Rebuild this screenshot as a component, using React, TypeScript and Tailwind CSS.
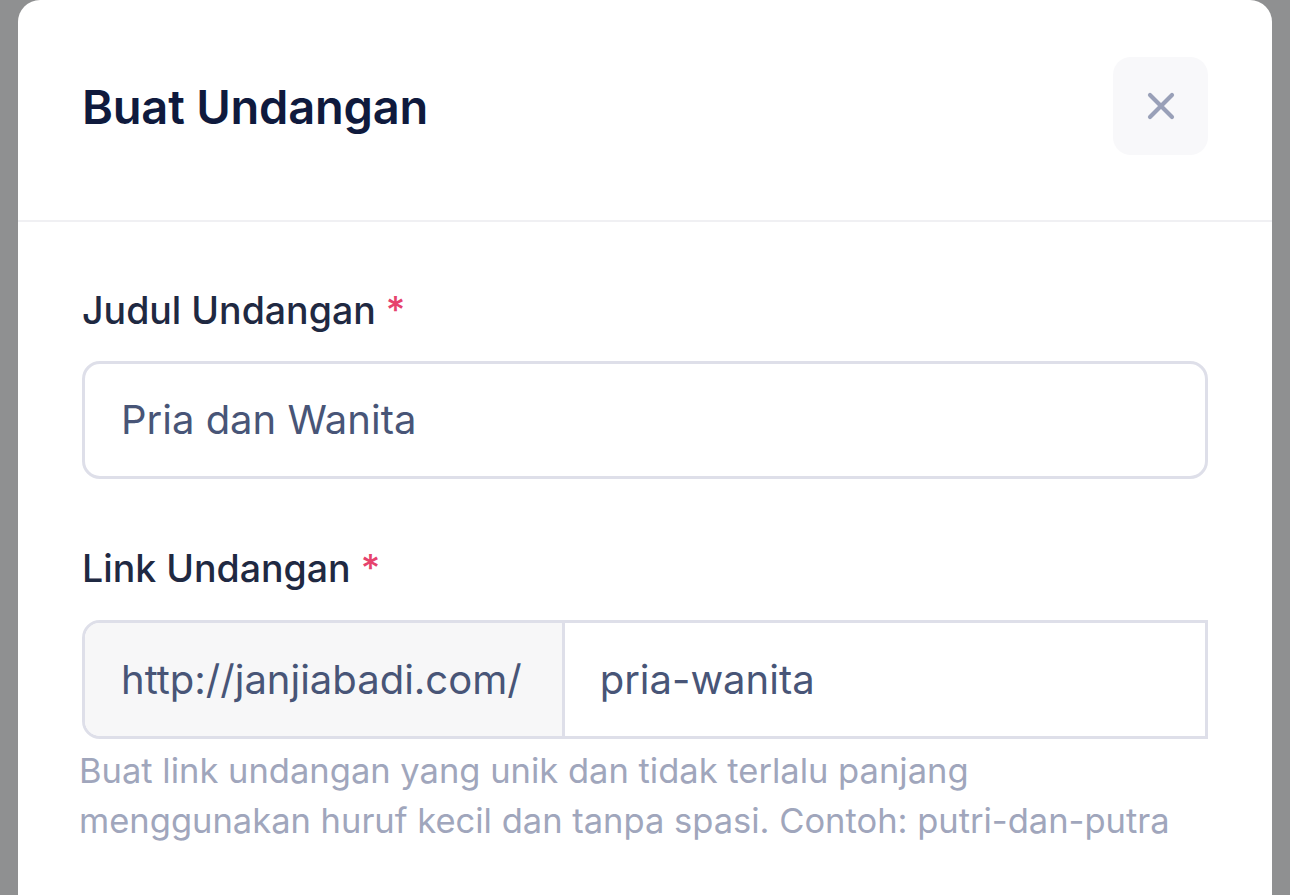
import React from "react";

export default function App() {
  return (
    <div
      className="h-[895px] overflow-hidden bg-[#8f9091] px-[18px]"
      style={{ fontFamily: "Inter, 'Noto Sans', sans-serif" }}
    >
      <div className="h-[920px] rounded-t-[22px] bg-white">
        <div className="flex items-center justify-between border-b-2 border-[#f0f0f3] px-[64px] pt-[57px] pb-[65px]">
          <h1 className="text-[47px] font-semibold leading-none tracking-[-0.2px] text-[#0f1a3d]">
            Buat Undangan
          </h1>
          <button className="flex h-[98px] w-[95px] items-center justify-center rounded-[18px] bg-[#f8f8fa]">
            <svg width="28" height="28" viewBox="0 0 28 28" fill="none">
              <path
                d="M3 3L25 25M25 3L3 25"
                stroke="#99a0b8"
                strokeWidth="4.2"
                strokeLinecap="round"
              />
            </svg>
          </button>
        </div>

        <div className="px-[64px] pt-[61px]">
          <label className="block text-[37.5px] font-medium leading-[56px] text-[#1f2942]">
            Judul Undangan <span className="text-[#e6436d]">*</span>
          </label>
          <div className="mt-[22px] flex h-[118px] items-center rounded-[18px] border-[3px] border-[#dedfe9] px-[36px]">
            <span className="text-[40px] text-[#485577]">Pria dan Wanita</span>
          </div>

          <label className="mt-[62px] block text-[37.5px] font-medium leading-[56px] text-[#1f2942]">
            Link Undangan <span className="text-[#e6436d]">*</span>
          </label>
          <div className="mt-[23px] flex h-[119px] rounded-l-[18px] border-[3px] border-[#dedfe9]">
            <div className="flex items-center rounded-l-[15px] border-r-[3px] border-[#dedfe9] bg-[#f7f7f8] pl-[36px] pr-[40px]">
              <span className="text-[40px] text-[#485577]">http://janjiabadi.com/</span>
            </div>
            <div className="flex flex-1 items-center px-[35px]">
              <span className="text-[40px] text-[#485577]">pria-wanita</span>
            </div>
          </div>
          <p className="-ml-[3px] mt-[7px] text-[34.5px] leading-[50px] text-[#a0a6bc]">
            Buat link undangan yang unik dan tidak terlalu panjang
            <br />
            menggunakan huruf kecil dan tanpa spasi. Contoh: putri-dan-putra
          </p>
        </div>
      </div>
    </div>
  );
}
